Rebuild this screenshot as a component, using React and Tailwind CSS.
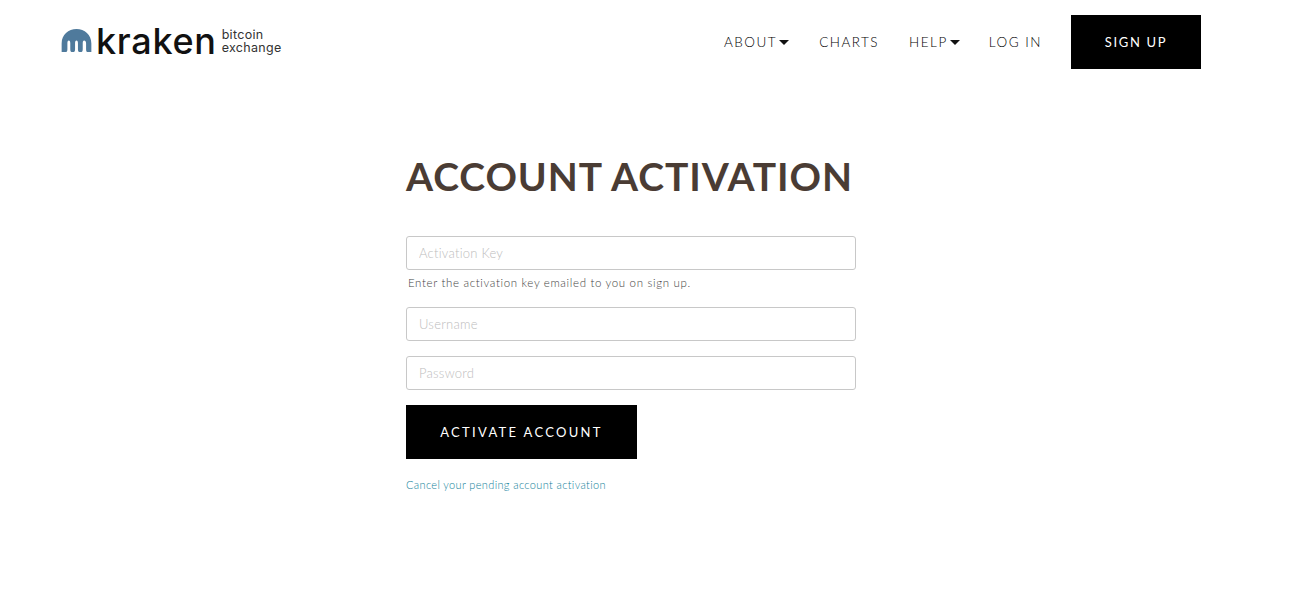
function Caret() {
  return <span className="ml-[2px] inline-block w-0 h-0 border-x-[5px] border-x-transparent border-t-[5px] border-t-[#111]" />;
}

function Field({ placeholder, className = "" }) {
  return (
    <input
      placeholder={placeholder}
      className={"block w-[450px] h-[34px] rounded-[3px] border border-[#c8c8c8] bg-white px-3 text-[13px] tracking-[0.25px] font-light outline-none placeholder:text-[#bdbdbd] " + className}
    />
  );
}

export default function App() {
  return (
    <div className="min-h-[616px] bg-white font-['Lato',sans-serif]">
      <header className="flex items-center justify-between pl-[60px] pr-[103px] pt-[15px]">
        <div className="flex items-center h-[54px]">
          <svg width="33" height="23" viewBox="0 0 33 24" className="mb-[3px]">
            <path
              fill="#4f7a9c"
              d="M1 24 V15 C1 6 8 0 16.5 0 C25 0 32 6 32 15 V24 H28.5 C27 24 26.5 23 26.5 21 V15 C26.5 13 25.5 12 24.5 12 C23.5 12 23 13 23 15 V21 C23 23 22.5 24 20.5 24 C18.5 24 18 23 18 21 V15 C18 13 17.5 12 16.5 12 C15.5 12 15 13 15 15 V21 C15 23 14.5 24 12.5 24 C10.5 24 10 23 10 21 V15 C10 13 9.5 12 8.5 12 C7.5 12 7 13 7 15 V21 C7 23 6.5 24 4.5 24 Z"
            />
          </svg>
          <span className="ml-[3px] mb-[3px] font-['Inter',sans-serif] text-[36px] leading-[54px] tracking-[0.7px] text-[#111] font-medium">kraken</span>
          <span className="ml-[5px] mb-[3px] flex flex-col font-['Inter',sans-serif] text-[12.5px] leading-[13px] tracking-[0.3px] text-[#333]">
            <span>bitcoin</span>
            <span>exchange</span>
          </span>
        </div>
        <nav className="flex items-center text-[13.5px] tracking-[1.5px] text-[#000] font-light">
          <a className="flex items-center mr-[30px]">ABOUT<Caret /></a>
          <a className="mr-[30px]">CHARTS</a>
          <a className="flex items-center mr-[29px]">HELP<Caret /></a>
          <a className="mr-[29px]">LOG IN</a>
          <a className="flex items-center justify-center w-[130px] h-[54px] bg-black text-white text-[13px] font-normal tracking-[1.7px] pt-[1px]">SIGN UP</a>
        </nav>
      </header>

      <main className="ml-[406px] w-[450px] pt-[84px]">
        <h1 className="text-[39px] leading-[47px] font-bold text-[#4a3c34] tracking-[0.93px] whitespace-nowrap">ACCOUNT ACTIVATION</h1>
        <Field placeholder="Activation Key" className="mt-[36px]" />
        <p className="mt-[6px] ml-[2px] text-[11.5px] leading-[14px] tracking-[0.65px] font-light text-[#444]">Enter the activation key emailed to you on sign up.</p>
        <Field placeholder="Username" className="mt-[17px]" />
        <Field placeholder="Password" className="mt-[15px]" />
        <button className="mt-[15px] block w-[231px] h-[54px] pt-[2px] bg-black text-white text-[13px] tracking-[2.3px] font-normal">ACTIVATE ACCOUNT</button>
        <a className="mt-[19px] block text-[11px] leading-[14px] tracking-[0.36px] font-light text-[#117f9b]">Cancel your pending account activation</a>
      </main>
    </div>
  );
}
